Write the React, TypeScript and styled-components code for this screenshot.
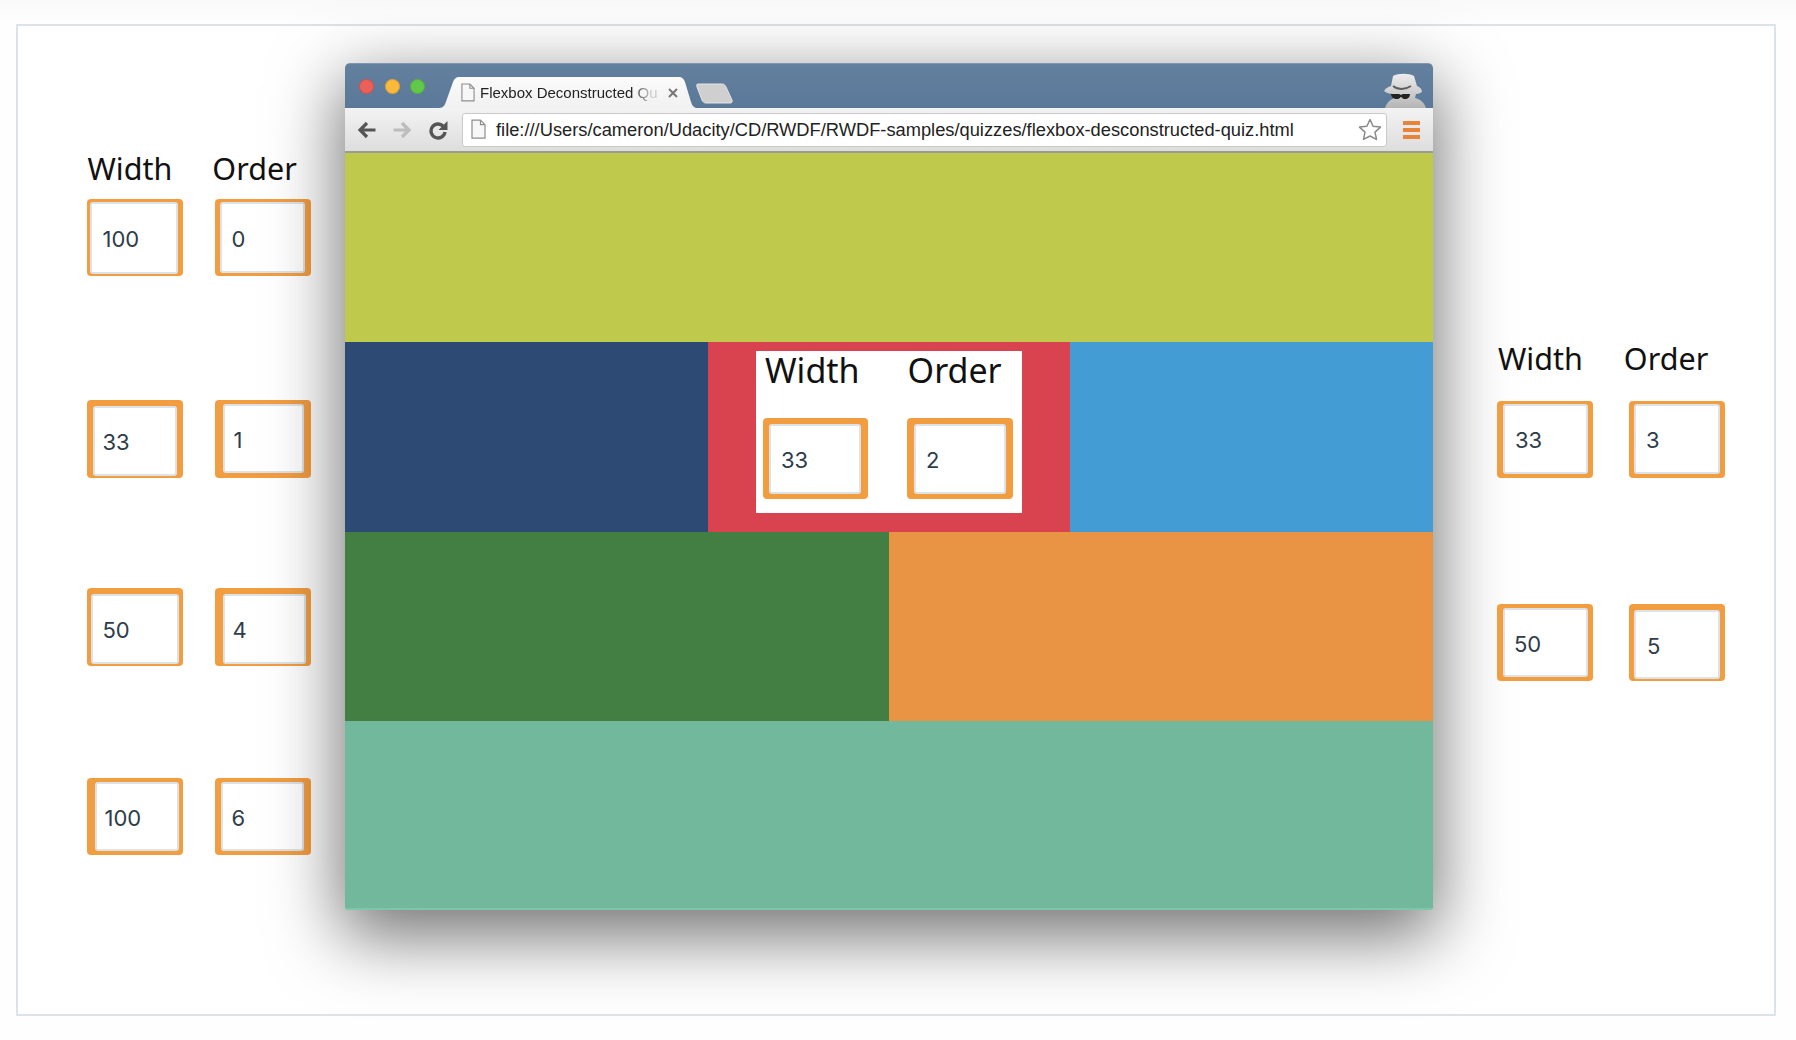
import React from "react";
import styled, { createGlobalStyle } from "styled-components";

type FieldData = {
  value: string;
  w?: number;
  h?: number;
  pad: [number, number, number, number];
  x: number;
  y: number;
};

const leftRows: { mt: number; fields: FieldData[] }[] = [
  {
    mt: 0,
    fields: [
      { value: "100", h: 77, pad: [3, 5, 2, 3], x: 16, y: 40 },
      { value: "0", h: 77, pad: [3, 6, 3, 5], x: 17, y: 40 },
    ],
  },
  {
    mt: 124,
    fields: [
      { value: "33", pad: [6, 6, 2, 6], x: 16, y: 42 },
      { value: "1", pad: [4, 7, 5, 8], x: 19, y: 40 },
    ],
  },
  {
    mt: 110,
    fields: [
      { value: "50", pad: [6, 4, 2, 4], x: 16, y: 42 },
      { value: "4", pad: [6, 5, 2, 8], x: 18, y: 42 },
    ],
  },
  {
    mt: 112,
    fields: [
      { value: "100", h: 77, pad: [4, 4, 4, 8], x: 18, y: 40 },
      { value: "6", h: 77, pad: [4, 7, 4, 6], x: 17, y: 40 },
    ],
  },
];

const rightRows: { mt: number; fields: FieldData[] }[] = [
  {
    mt: 0,
    fields: [
      { value: "33", h: 77, pad: [3, 5, 4, 6], x: 18, y: 39 },
      { value: "3", h: 77, pad: [3, 5, 4, 5], x: 17, y: 39 },
    ],
  },
  {
    mt: 126,
    fields: [
      { value: "50", h: 77, pad: [4, 5, 4, 6], x: 17, y: 40 },
      { value: "5", h: 77, pad: [6, 5, 2, 5], x: 18, y: 42 },
    ],
  },
];

const GlobalStyle = createGlobalStyle`
  html, body {
    margin: 0;
    padding: 0;
    background: #fff;
  }
`;

const Page = styled.div`
  box-sizing: border-box;
  width: 1796px;
  height: 1040px;
  padding: 24px 20px 24px 16px;
  background: linear-gradient(#f9f9f9 0, #fefefe 24px, #fefefe 100%);
  overflow: hidden;
`;

const Frame = styled.div`
  box-sizing: border-box;
  height: 100%;
  display: flex;
  align-items: flex-start;
  background: #fff;
  border: 2px solid #dbe2e8;
`;

const SideColumn = styled.div<{ $w: number; $top: number; $left: number }>`
  box-sizing: border-box;
  flex: 0 0 ${(p) => p.$w}px;
  padding: ${(p) => p.$top}px 0 0 ${(p) => p.$left}px;
`;

const LabelRow = styled.div<{ $left: number; $gap: number; $mb: number }>`
  display: flex;
  gap: ${(p) => p.$gap}px;
  padding-left: ${(p) => p.$left}px;
  margin-bottom: ${(p) => p.$mb}px;
`;

const Label = styled.div<{ $big?: boolean }>`
  font-family: "Noto Sans", "Open Sans", sans-serif;
  font-size: ${(p) => (p.$big ? 34 : 30.5)}px;
  line-height: ${(p) => (p.$big ? 38 : 40)}px;
  color: #111;
  white-space: nowrap;
`;

const FieldRow = styled.div<{ $mt: number; $gap: number }>`
  display: flex;
  gap: ${(p) => p.$gap}px;
  margin-top: ${(p) => p.$mt}px;
`;

const FieldBox = styled.div<{ $w: number; $h: number; $pad: number[] }>`
  box-sizing: border-box;
  width: ${(p) => p.$w}px;
  height: ${(p) => p.$h}px;
  padding: ${(p) => p.$pad.join("px ")}px;
  background: #f39d41;
  border-radius: 4px;
  display: flex;
`;

const FieldInner = styled.div<{ $x: number; $y: number }>`
  box-sizing: border-box;
  flex: 1;
  background: #fff;
  border: 2px solid #dbe2e8;
  border-radius: 3px;
  padding: ${(p) => p.$y}px 0 0 ${(p) => p.$x}px;
  font-family: Inter, "Open Sans", sans-serif;
  font-size: 22px;
  line-height: 26px;
  color: #2e3d49;
`;

const Browser = styled.div`
  flex: 0 0 1088px;
  height: 847px;
  margin-top: 37px;
  display: flex;
  flex-direction: column;
  border-radius: 5px 5px 3px 3px;
  overflow: hidden;
  box-shadow: 0 22px 70px 4px rgba(0, 0, 0, 0.56);
`;

const TitleBar = styled.div`
  box-sizing: border-box;
  flex: 0 0 45px;
  display: flex;
  align-items: flex-end;
  padding: 0 7px 0 14px;
  background: linear-gradient(#64809f, #5a7898);
  border-top: 1px solid #7f97b0;
`;

const Lights = styled.div`
  align-self: flex-start;
  display: flex;
  gap: 10.5px;
  margin-top: 15px;
`;

const Light = styled.span<{ $color: string }>`
  width: 15px;
  height: 15px;
  border-radius: 50%;
  background: ${(p) => p.$color};
  box-shadow: inset 0 0 0 1px rgba(0, 0, 0, 0.12);
`;

const Tab = styled.div`
  position: relative;
  box-sizing: border-box;
  width: 260px;
  height: 31px;
  margin-left: 13px;
  display: flex;
  align-items: center;
  padding: 0 0 0 23px;
`;

const TabShape = styled.svg`
  position: absolute;
  inset: 0;
`;

const TabIcon = styled.span`
  position: relative;
  flex: 0 0 14px;
  display: flex;
`;

const TabTitle = styled.div`
  position: relative;
  width: 178px;
  margin-left: 5px;
  margin-right: 10px;
  white-space: nowrap;
  font-family: "Liberation Sans", Arial, sans-serif;
  font-size: 15px;
  color: #222;
  -webkit-mask-image: linear-gradient(90deg, #000 85%, rgba(0, 0, 0, 0.2) 96%);
  mask-image: linear-gradient(90deg, #000 85%, rgba(0, 0, 0, 0.2) 96%);
`;

const TabClose = styled.svg`
  position: relative;
`;

const NewTab = styled.svg`
  align-self: flex-start;
  margin: 19px 0 0 -3px;
`;

const Incognito = styled.svg`
  margin-left: auto;
`;

const Toolbar = styled.div`
  box-sizing: border-box;
  flex: 0 0 45px;
  display: flex;
  align-items: center;
  padding: 0 13px 0 12px;
  background: linear-gradient(#f3f3f3, #dddddd);
  border-bottom: 2px solid #9b9b96;
`;

const NavButton = styled.svg<{ $ml: number }>`
  flex: none;
  margin-left: ${(p) => p.$ml}px;
`;

const Omnibox = styled.div`
  box-sizing: border-box;
  width: 926px;
  height: 34px;
  margin-left: 14px;
  display: flex;
  align-items: center;
  padding: 0 4px 0 8px;
  background: #fff;
  border: 1px solid #c9c9c9;
  border-radius: 3px;
`;

const Url = styled.div`
  flex: 1;
  margin-left: 10px;
  font-family: "Liberation Sans", Arial, sans-serif;
  font-size: 18.3px;
  color: #222;
  white-space: nowrap;
`;

const Menu = styled.div`
  flex: none;
  width: 17px;
  margin-left: 16px;
  display: flex;
  flex-direction: column;
  gap: 3px;
`;

const MenuBar = styled.span`
  height: 4px;
  background: #e8833a;
`;

const Viewport = styled.div`
  flex: 1;
  display: grid;
  grid-template-rows: repeat(4, 1fr);
`;

const Band = styled.div`
  display: flex;
`;

const Block = styled.div<{ $color: string }>`
  flex: 1 1 0;
  background: ${(p) => p.$color};
`;

const RedBlock = styled(Block)`
  display: flex;
  justify-content: center;
  align-items: flex-start;
  padding-top: 9px;
`;

const TealBlock = styled(Block)`
  box-shadow: inset 0 -2px 0 #7dc6a8;
`;

const Panel = styled.div`
  box-sizing: border-box;
  width: 266px;
  height: 162px;
  padding: 0 0 0 7px;
  background: #fff;
`;

const PageIcon: React.FC<{ size: number }> = ({ size }) => (
  <svg width={size} height={size * 1.35} viewBox="0 0 15 20">
    <path d="M1 1h8.5L14 5.5V19H1z" fill="#f7f7f7" stroke="#8d8d8d" strokeWidth="1.2" />
    <path d="M9.5 1v4.5H14" fill="none" stroke="#8d8d8d" strokeWidth="1.2" />
  </svg>
);

const Field: React.FC<FieldData> = ({ value, w = 96, h = 78, pad, x, y }) => (
  <FieldBox $w={w} $h={h} $pad={pad}>
    <FieldInner $x={x - pad[3] - 2} $y={y - 13 - pad[0] - 2}>
      {value}
    </FieldInner>
  </FieldBox>
);

const App: React.FC = () => {
  return (
    <Page>
      <GlobalStyle />
      <Frame>
        <SideColumn $w={327} $top={122} $left={68.5}>
          <LabelRow $left={1} $gap={40} $mb={11}>
            <Label>Width</Label>
            <Label>Order</Label>
          </LabelRow>
          {leftRows.map((row) => (
            <FieldRow key={row.fields[0].value + row.mt} $mt={row.mt} $gap={32}>
              {row.fields.map((f) => (
                <Field key={f.value} {...f} />
              ))}
            </FieldRow>
          ))}
        </SideColumn>

        <Browser>
          <TitleBar>
            <Lights>
              <Light $color="#ec5f5a" />
              <Light $color="#fbb93b" />
              <Light $color="#62c84a" />
            </Lights>
            <Tab>
              <TabShape width="260" height="31" viewBox="0 0 260 31">
                <defs>
                  <linearGradient id="tabFill" x1="0" y1="0" x2="0" y2="1">
                    <stop offset="0" stopColor="#fbfbfb" />
                    <stop offset="1" stopColor="#f1f1f1" />
                  </linearGradient>
                </defs>
                <path
                  d="M0 31c4 0 6-1 7.500-5L15 5c1-3 3-5 6-5h220c3 0 5 2 6 5l6 20c1.500 4 3 6 7 6z"
                  fill="url(#tabFill)"
                />
              </TabShape>
              <TabIcon>
                <PageIcon size={14} />
              </TabIcon>
              <TabTitle>Flexbox Deconstructed Qu</TabTitle>
              <TabClose width="10" height="10" viewBox="0 0 10 10">
                <path d="M1 1l8 8M9 1l-8 8" stroke="#777" strokeWidth="2" />
              </TabClose>
            </Tab>
            <NewTab width="40" height="21" viewBox="0 0 40 21">
              <path
                d="M3 1h24c2 0 3 1 4 3l6 13c.5 2 0 3-2 3H11c-2 0-3-1-4-3L2 4C1.500 2 1.500 1 3 1z"
                fill="#cfcfcf"
                stroke="#e4e4e4"
              />
            </NewTab>
            <Incognito width="42" height="35" viewBox="0 0 42 35">
              <defs>
                <linearGradient id="spyFill" x1="0" y1="0" x2="0" y2="1">
                  <stop offset="0" stopColor="#ededed" />
                  <stop offset="1" stopColor="#b5b5b5" />
                </linearGradient>
              </defs>
              <path
                d="M9 3C14 0 25 0 30 3L33 13C36 14 38 16 38 19C35 21 33 21 32 21L31 25C36 26 40 29 42 35L1 35C3 29 7 26 11 25L9 21C6 21 2 20 0 18C2 15 4 14 7 13Z"
                fill="url(#spyFill)"
              />
              <path d="M9 13C14 17 21 17 27 13" fill="none" stroke="#5f5f5f" strokeWidth="1.800" />
              <path
                d="M7 21h8c1 0 1.500 1 2 1s1-1 2-1h7c0 3-2 5-5 5s-3-2-4-2-1 2-4 2-6-2-6-5z"
                fill="#222"
              />
            </Incognito>
          </TitleBar>

          <Toolbar>
            <NavButton $ml={0} width="20" height="20" viewBox="0 0 20 20">
              <path d="M18.500 10H3M10 3l-7 7 7 7" fill="none" stroke="#555" strokeWidth="3.200" />
            </NavButton>
            <NavButton $ml={15} width="20" height="20" viewBox="0 0 20 20">
              <path d="M1.500 10H17M10 3l7 7-7 7" fill="none" stroke="#bcbcbc" strokeWidth="3.200" />
            </NavButton>
            <NavButton $ml={16} width="20" height="20" viewBox="0 0 20 20">
              <path d="M15 6A7 7 0 1 0 17 12" fill="none" stroke="#555" strokeWidth="3.400" />
              <path d="M19.500 1v9h-9z" fill="#555" />
            </NavButton>
            <Omnibox>
              <PageIcon size={15} />
              <Url>file:///Users/cameron/Udacity/CD/RWDF/RWDF-samples/quizzes/flexbox-desconstructed-quiz.html</Url>
              <svg width="24" height="23" viewBox="0 0 24 23">
                <path
                  d="M12 1.500l3.100 6.700 7.400.9-5.500 5 1.500 7.300L12 18l-6.500 3.400L7 14.100l-5.500-5 7.400-.9z"
                  fill="#fff"
                  stroke="#8a8a8a"
                  strokeWidth="1.500"
                  strokeLinejoin="round"
                />
              </svg>
            </Omnibox>
            <Menu>
              <MenuBar />
              <MenuBar />
              <MenuBar />
            </Menu>
          </Toolbar>

          <Viewport>
            <Band>
              <Block $color="#bfc94b" />
            </Band>
            <Band>
              <Block $color="#2d4a75" />
              <RedBlock $color="#d8434f">
                <Panel>
                  <LabelRow $left={2} $gap={48} $mb={0}>
                    <Label $big>Width</Label>
                    <Label $big>Order</Label>
                  </LabelRow>
                  <FieldRow $mt={29} $gap={39}>
                    <Field value="33" w={105} h={81} pad={[6, 7, 5, 6]} x={18} y={42} />
                    <Field value="2" w={106} h={81} pad={[6, 7, 5, 7]} x={19} y={42} />
                  </FieldRow>
                </Panel>
              </RedBlock>
              <Block $color="#439dd4" />
            </Band>
            <Band>
              <Block $color="#437e43" />
              <Block $color="#e99444" />
            </Band>
            <Band>
              <TealBlock $color="#71b89c" />
            </Band>
          </Viewport>
        </Browser>

        <SideColumn $w={342} $top={312} $left={64}>
          <LabelRow $left={1} $gap={41} $mb={23}>
            <Label>Width</Label>
            <Label>Order</Label>
          </LabelRow>
          {rightRows.map((row) => (
            <FieldRow key={row.fields[0].value} $mt={row.mt} $gap={36}>
              {row.fields.map((f) => (
                <Field key={f.value} {...f} />
              ))}
            </FieldRow>
          ))}
        </SideColumn>
      </Frame>
    </Page>
  );
};

export default App;
